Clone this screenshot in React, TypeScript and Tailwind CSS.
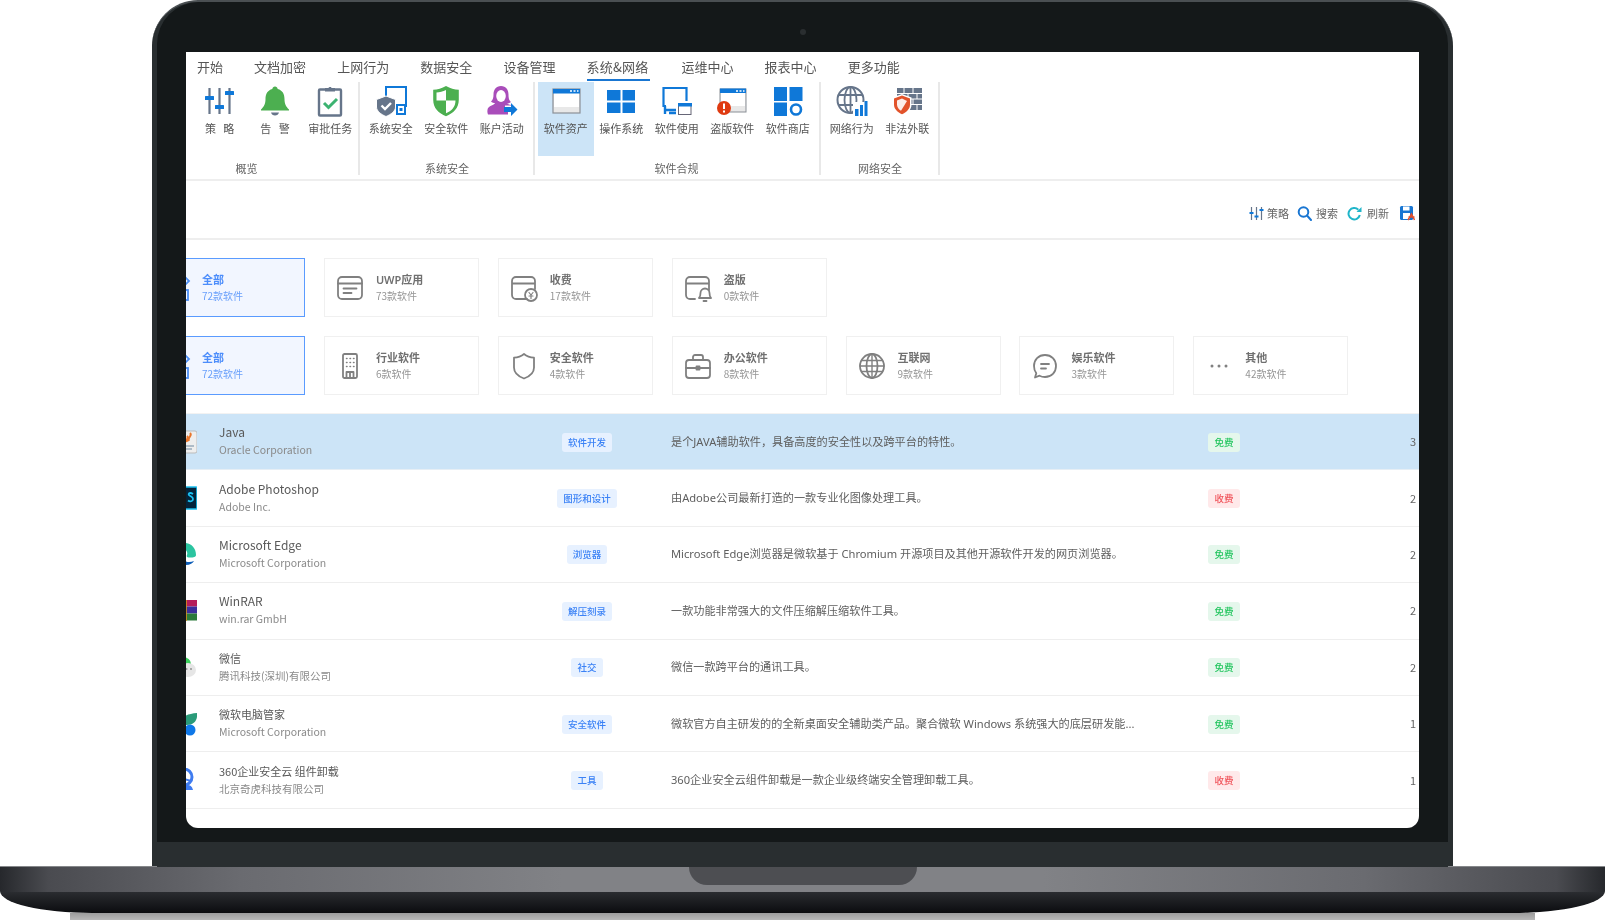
import React from "react";

type IC = React.ReactNode;
const S = ({ children, w = 32 }: { children: IC; w?: number }) => (
  <svg width={w} height={w} viewBox="0 0 32 32" fill="none" className="shrink-0">{children}</svg>
);
const G = "#66758a";
const B = "#0f78d8";

const rIcons: Record<string, IC> = {
  sliders: (
    <S>
      <path d="M5.5 3v26M15.500 3v26M25.500 3v26" stroke={G} strokeWidth="2.2" />
      <rect x="1" y="11" width="9" height="4" rx=".6" fill={B} />
      <rect x="11" y="20" width="9" height="4" rx=".6" fill={B} />
      <rect x="21" y="6" width="9" height="4" rx=".6" fill={B} />
    </S>
  ),
  bell: (
    <S>
      <path d="M16 1.500c1.500 0 2.500 1 2.700 2.500 4.800 1.300 6.800 5 6.800 10 0 5 1.500 7.500 4.500 10.500v1H2v-1c3-3 4.500-5.500 4.500-10.500s2-8.700 6.800-10c.2-1.500 1.200-2.500 2.700-2.500z" fill="#4caf50" />
      <path d="M12 27.500h8c-.5 2-2 3-4 3s-3.500-1-4-3z" fill={G} />
    </S>
  ),
  clip: (
    <S>
      <rect x="5" y="4.500" width="22" height="26" rx="1" stroke={G} strokeWidth="2.400" />
      <path d="M11 6.500V3h3.500c.3-1.400 3-1.400 3 0H21v3.500z" fill={G} />
      <path d="M10 18l4.500 4.500L23 14" stroke="#3cb371" strokeWidth="3" />
    </S>
  ),
  syssec: (
    <S>
      <rect x="11" y="2" width="20" height="19" stroke={B} strokeWidth="2" />
      <rect x="22" y="20" width="8" height="9" fill="#fff" stroke={B} strokeWidth="2" />
      <rect x="24.500" y="23" width="3" height="3" fill={B} />
      <path d="M11 11l9.500 3.500V22c0 4-4.500 7.500-9.500 9.500C6 29.500 1.500 26 1.500 22v-7.500z" fill={G} stroke="#fff" strokeWidth="1" />
      <path d="M6.500 20.500l3.500 3.500 6-6" stroke="#fff" strokeWidth="2.400" />
    </S>
  ),
  shield: (
    <S>
      <path d="M16 1c4 2.500 8.500 3.600 12.800 3.800v10c0 8.500-5.500 13.500-12.800 16.500C8.700 28.300 3.200 23.300 3.200 14.800v-10C7.500 4.600 12 3.500 16 1z" fill="#4caf50" />
      <path d="M16 5v10.500H6.500V7.500C9.500 7.200 13 6.400 16 5zM16 15.500h9.500c0 6.500-4 10.500-9.500 12.800z" fill="#fff" />
    </S>
  ),
  user: (
    <S>
      <path d="M15 1c5 0 7.500 4 7.500 8.500s1 6 2.500 7.500c-1.500 1-3 1.500-4 1.500 2 1 4 1.500 5 2H19v6h3v3H2c-.8-2-.8-4-.2-6 1.200-2.500 5-3.300 7.400-5-1.500-.5-3-1-4.200-2 1.800-1.800 2.500-3.500 2.500-7C7.500 5 10 1 15 1z" fill="#a94dba" />
      <ellipse cx="15" cy="11" rx="4.800" ry="6" fill="#fff" />
      <path d="M18 22h7v-4l6.500 6.500L25 31v-4h-7z" fill={B} />
    </S>
  ),
  win: (
    <S>
      <rect x="3" y="4" width="27" height="24" fill="#e8e8e8" stroke="#8a8f96" strokeWidth="1.200" />
      <rect x="4" y="8" width="25" height="14" fill="#fff" />
      <rect x="3" y="4" width="27" height="4.500" fill={B} />
      <path d="M20 6h2M23.500 6h2M27 6h1.500" stroke="#fff" strokeWidth="1.500" />
    </S>
  ),
  winos: (
    <S>
      <path d="M2 5h13.500v10.500H2zM17.500 5H30v10.500H17.500zM2 17.500h13.500V28H2zM17.500 17.500H30V28H17.500z" fill={B} />
    </S>
  ),
  mon: (
    <S>
      <path d="M5 21H2.500V3H25.500v13" stroke={B} strokeWidth="2.200" />
      <path d="M3 25h12M8 28h7M4 21v8" stroke={B} strokeWidth="2.400" />
      <rect x="17.500" y="19" width="12.500" height="10.500" fill="#fff" stroke="#667" strokeWidth="1" />
      <rect x="17" y="18" width="14" height="3.500" fill={B} />
    </S>
  ),
  pirate: (
    <S>
      <rect x="4" y="4" width="26" height="23" fill="#e8e8e8" stroke="#8a8f96" strokeWidth="1" />
      <rect x="5" y="8" width="24" height="13" fill="#fff" />
      <rect x="4" y="3.500" width="26" height="4.500" fill={B} />
      <path d="M20 6h2M23.500 6h2M27 6h1.500" stroke="#fff" strokeWidth="1.500" />
      <circle cx="8" cy="23" r="7" fill="#df3a10" />
      <path d="M8 18.500v5.500M8 25.500v2" stroke="#fff" strokeWidth="2" />
    </S>
  ),
  store: (
    <S>
      <path d="M2 2h13v14H2zM17.500 2H30.500v14H17.500zM2 17.500h13V31H2z" fill={B} />
      <circle cx="24" cy="24.500" r="5" stroke={B} strokeWidth="2.600" />
    </S>
  ),
  globe: (
    <S>
      <circle cx="14.500" cy="15" r="13" stroke={G} strokeWidth="2" />
      <ellipse cx="14.500" cy="15" rx="6" ry="13" stroke={G} strokeWidth="1.800" />
      <path d="M14.500 2v26M2 10h25M2 20h25" stroke={G} strokeWidth="1.800" />
      <rect x="17" y="17" width="15" height="15" fill="#fff" />
      <path d="M19 24h3.500v7H19zM24 20h3v11h-3zM28.500 16h3v15h-3z" fill={B} />
    </S>
  ),
  wall: (
    <S>
      <path d="M6 3h25v22H6z" fill={G} />
      <path d="M6 8.500h25M6 14h25M6 19.500h25M13 3v5.500M22 3v5.500M17 8.500V14M26 8.500V14M22 14v5.500M26 19.500V25" stroke="#fff" strokeWidth="1" />
      <path d="M11 9l9.500 3.500v7C20.500 25 16 29 11 31 5.800 29 1.500 25 1.500 19.500v-7z" fill="#fff" />
      <path d="M11 10.500l8 3v6c0 4.500-3.500 7.800-8 9.800-4.500-2-8-5.300-8-9.800v-6z" fill="#e2532b" />
      <path d="M11 13.500l-5 2v4c0 3 2 5 4 6.300L16 16z" fill="#fff" opacity=".9" />
    </S>
  ),
};

const Ribbon = ({ icon, label, active }: { icon: string; label: string; active?: boolean }) => (
  <div className={`w-[55.500px] flex flex-col items-center pt-[3px] h-[74px] ${active ? "bg-[#cce4f7]" : ""}`}>
    <div className="h-[31px] flex items-center justify-center">{rIcons[icon]}</div>
    <div className="mt-[5px] text-[11px] leading-[14px] text-[#555] whitespace-pre">{label}</div>
  </div>
);

const groups = [
  { w: "w-[174px] pl-[6px]", label: "概览", lc: "pr-[57px]", items: [["sliders", "策   略"], ["bell", "告   警"], ["clip", "审批任务"]] },
  { w: "w-[175px] pl-[3px]", label: "系统安全", lc: "pr-[2px]", items: [["syssec", "系统安全"], ["shield", "安全软件"], ["user", "账户活动"]] },
  { w: "w-[286px] pl-[3px]", label: "软件合规", lc: "pr-[4px]", items: [["win", "软件资产"], ["winos", "操作系统"], ["mon", "软件使用"], ["pirate", "盗版软件"], ["store", "软件商店"]] },
  { w: "w-[119px] pl-[3px]", label: "网络安全", lc: "pr-[2px]", items: [["globe", "网络行为"], ["wall", "非法外联"]] },
];

const menu = ["开始", "文档加密", "上网行为", "数据安全", "设备管理", "系统&网络", "运维中心", "报表中心", "更多功能"];

const CI = ({ children }: { children: IC }) => (
  <svg width="30" height="30" viewBox="0 0 30 30" fill="none" stroke="#808080" strokeWidth="1.800" strokeLinecap="round" strokeLinejoin="round" className="shrink-0">{children}</svg>
);
const cardIcons: Record<string, IC> = {
  all: (
    <svg width="30" height="30" viewBox="0 0 30 30" fill="none" stroke="#4b8ef5" strokeWidth="1.800" className="shrink-0">
      <rect x="3" y="3" width="10" height="10" />
      <rect x="3" y="17" width="10" height="10" />
      <rect x="17" y="17" width="10" height="10" />
      <path d="M22 2l6 6-6 6-6-6z" />
    </svg>
  ),
  uwp: <CI><rect x="3" y="4" width="24" height="22" rx="4" /><path d="M3 10.500h24M8.500 15.500h13M8.500 20h8" /></CI>,
  fee: <CI><path d="M18 26H7a4 4 0 0 1-4-4V8a4 4 0 0 1 4-4h15a4 4 0 0 1 4 4v8M3 10.500h23" /><circle cx="22" cy="22" r="6" /><path d="M20 19.500l2 2.500 2-2.500M22 22v3.500M20 23h4" strokeWidth="1.200" /></CI>,
  pir: <CI><path d="M12 26H7a4 4 0 0 1-4-4V8a4 4 0 0 1 4-4h15a4 4 0 0 1 4 4v9M3 10.500h23" /><path d="M16 25c1.500-1.500 1.500-3 1.500-5a4.500 4.500 0 0 1 9 0c0 2 0 3.500 1.500 5zM20.500 28h3" /></CI>,
  ind: (
    <CI>
      <rect x="8" y="3" width="14" height="24" rx="1.500" />
      <path d="M11.500 7.500h.5M15 7.500h.5M18.500 7.500h.5M11.500 11.500h.5M15 11.500h.5M18.500 11.500h.5M11.500 15.500h.5M15 15.500h.5M18.500 15.500h.5" strokeWidth="1.500" />
      <path d="M11.500 27v-6h7v6M15 21v6" />
    </CI>
  ),
  sec: <CI><path d="M15 3c3 2.500 6.500 3.500 10 3.700v9.800c0 5.500-4.500 9-10 11-5.500-2-10-5.500-10-11V6.700C8.500 6.500 12 5.500 15 3z" /></CI>,
  off: <CI><rect x="3" y="9" width="24" height="18" rx="3" /><path d="M10 9V6a2 2 0 0 1 2-2h6a2 2 0 0 1 2 2v3M3 17h24" /><rect x="13.500" y="15.500" width="3" height="3" fill="#808080" /></CI>,
  net: <CI><circle cx="15" cy="15" r="12" /><ellipse cx="15" cy="15" rx="5.500" ry="12" /><path d="M15 3v24M3 15h24M4.500 9.500h21M4.500 20.500h21" strokeWidth="1.400" /></CI>,
  fun: <CI><path d="M15 4c6.500 0 11 4.800 11 11s-4.500 11-11 11c-2 0-4-.5-5.500-1.300L5 26.500l1.300-4.200C4.800 20.300 4 18 4 15 4 8.800 8.500 4 15 4z" /><path d="M11 13h8M11 17.500h5" /></CI>,
  more: <svg width="30" height="30" viewBox="0 0 30 30" fill="#808080" className="shrink-0"><circle cx="8" cy="15" r="1.500" /><circle cx="15" cy="15" r="1.500" /><circle cx="22" cy="15" r="1.500" /></svg>,
};

const Card = ({ icon, t, s, active }: { icon: string; t: string; s: string; active?: boolean }) => (
  <div className={`w-[155px] h-[59px] flex items-center pl-[10px] gap-[11px] border-[1.500px] ${active ? "border-[#5a9bff] bg-[#f2f6ff]" : "border-[#f0f0f0] bg-white"}`}>
    {cardIcons[icon]}
    <div className="min-w-0">
      <div className={`text-[11px] leading-[15px] font-semibold font-['Noto_Sans','Noto_Sans_CJK_SC',sans-serif] ${active ? "text-[#4c8dfb]" : "text-[#707070]"}`}>{t}</div>
      <div className={`text-[10px] leading-[17px] ${active ? "text-[#6aa0fb]" : "text-[#969696]"}`}>{s}</div>
    </div>
  </div>
);

const row1: [string, string, string][] = [["all", "全部", "72款软件"], ["uwp", "UWP应用", "73款软件"], ["fee", "收费", "17款软件"], ["pir", "盗版", "0款软件"]];
const row2: [string, string, string][] = [["all", "全部", "72款软件"], ["ind", "行业软件", "6款软件"], ["sec", "安全软件", "4款软件"], ["off", "办公软件", "8款软件"], ["net", "互联网", "9款软件"], ["fun", "娱乐软件", "3款软件"], ["more", "其他", "42款软件"]];

const appIcons: IC[] = [
  <svg width="24" height="24" viewBox="0 0 24 24"><rect x="6" y="1" width="18" height="22" rx="2" fill="#eee" stroke="#bbb" /><path d="M17 3c3 3-3 4-1 8M14 6c2 2-1 3 0 6" stroke="#e8762c" strokeWidth="2" fill="none" /><path d="M13 16h8M13 19h6" stroke="#9ab" strokeWidth="1.500" /></svg>,
  <svg width="24" height="24" viewBox="0 0 24 24"><rect x="4" y="1" width="20" height="22" rx="1" fill="#04233a" stroke="#1bc0f0" strokeWidth="1.600" /><path d="M21 8c-3-2-5-.5-4 1s4 1.500 4 4-3 3-5 1.500" stroke="#1bc0f0" strokeWidth="1.800" fill="none" transform="translate(-1 0)" /></svg>,
  <svg width="24" height="24" viewBox="0 0 24 24"><path d="M23 13C23 6 18 1 12 1 7 1 3 4 2 8c3-3 10-3 12 2 1 3-1 3 0 5 2 1 9 1 9-2z" fill="#2bc4a0" /><path d="M2 8c-2 7 3 15 11 15 4 0 7-2 8-4-5 2-10 1-11-3-1-3 1-5 3-6-3-3-9-3-11-2z" fill="#0f5fb8" /></svg>,
  <svg width="24" height="24" viewBox="0 0 24 24"><rect x="4" y="1" width="20" height="6.500" fill="#b51d5a" /><rect x="4" y="7.500" width="20" height="7" fill="#3b2d9a" /><rect x="4" y="14.500" width="20" height="7" fill="#2a7a3a" /><rect x="6" y="1" width="8" height="21" fill="#d8921a" opacity=".8" /></svg>,
  <svg width="24" height="24" viewBox="0 0 24 24"><ellipse cx="10" cy="9" rx="8" ry="7" fill="#3ad05c" /><ellipse cx="15" cy="15" rx="8" ry="7" fill="#e6e6e6" /><circle cx="13.500" cy="14" r="1.100" fill="#999" /><circle cx="18" cy="14" r="1.100" fill="#999" /></svg>,
  <svg width="24" height="24" viewBox="0 0 24 24"><path d="M6 13c0-7 6-11 18-12 1 7-3 12-10 12z" fill="#2a9b79" /><circle cx="17" cy="18" r="5.500" fill="#0f78e8" /></svg>,
  <svg width="24" height="24" viewBox="0 0 24 24"><circle cx="11" cy="9" r="8" fill="none" stroke="#3f7cf0" strokeWidth="3" /><path d="M4 9l14 4" stroke="#3f7cf0" strokeWidth="2" /><path d="M6 21a4 4 0 0 1 4-4h4c3 0 5 1 6 5H6z" fill="#3f7cf0" /></svg>,
];

const rows = [
  ["Java", "Oracle Corporation", "软件开发", "是个JAVA辅助软件，具备高度的安全性以及跨平台的特性。", "免费", "3"],
  ["Adobe Photoshop", "Adobe Inc.", "图形和设计", "由Adobe公司最新打造的一款专业化图像处理工具。", "收费", "2"],
  ["Microsoft Edge", "Microsoft Corporation", "浏览器", "Microsoft Edge浏览器是微软基于 Chromium 开源项目及其他开源软件开发的网页浏览器。", "免费", "2"],
  ["WinRAR", "win.rar GmbH", "解压刻录", "一款功能非常强大的文件压缩解压缩软件工具。", "免费", "2"],
  ["微信", "腾讯科技(深圳)有限公司", "社交", "微信一款跨平台的通讯工具。", "免费", "2"],
  ["微软电脑管家", "Microsoft Corporation", "安全软件", "微软官方自主研发的的全新桌面安全辅助类产品。聚合微软 Windows 系统强大的底层研发能...", "免费", "1"],
  ["360企业安全云 组件卸载", "北京奇虎科技有限公司", "工具", "360企业安全云组件卸载是一款企业级终端安全管理卸载工具。", "收费", "1"],
];

const Tool = ({ icon, label, gap }: { icon: IC; label: string; gap: string }) => (
  <div className={`flex items-center ${gap}`}>
    {icon}
    <span className="text-[11px] text-[#666] leading-none">{label}</span>
  </div>
);

export default function App() {
  return (
    <div className="w-[1605px] h-[920px] bg-white overflow-hidden font-['Noto_Sans_CJK_SC','Noto_Sans',sans-serif]">
      {/* lid */}
      <div className="ml-[152px] w-[1301px] h-[867px] bg-[#292e30] rounded-t-[46px] border-t-2 border-[#4a4f52] flex flex-col px-[5px]">
        <div className="h-[840px] bg-[#141819] rounded-t-[42px] px-[29px] flex flex-col">
          <div className="h-[50px] flex justify-center pt-[27px] shrink-0">
            <div className="w-[6px] h-[6px] rounded-full bg-[#2a2e30]" />
          </div>
          <div className="w-[1233px] h-[776px] bg-white rounded-b-[12px] overflow-hidden shrink-0 [filter:blur(0.35px)]">
            {/* menu */}
            <div className="h-[30px] flex items-start pl-[11px] gap-[31.100px] pt-[5px]">
              {menu.map((m, i) => (
                <div key={m} className={`text-[13px] leading-[19px] text-[#555] whitespace-nowrap ${i === 5 ? "h-[24px] border-b-2 border-[#1976d2] pr-[2px] tracking-[0.2px]" : "h-[21px]"}`}>{m}</div>
              ))}
            </div>
            {/* ribbon */}
            <div className="h-[99px] border-b-2 border-[#eeeeee] flex">
              {groups.map((g) => (
                <div key={g.label} className={`h-[93px] border-r-2 border-[#e8e8e8] flex flex-col ${g.w}`}>
                  <div className="flex">
                    {g.items.map(([ic, l]) => (
                      <Ribbon key={l} icon={ic} label={l} active={l === "软件资产"} />
                    ))}
                  </div>
                  <div className={`mt-[5px] text-center text-[11px] leading-[14px] text-[#666] ${g.lc}`}>{g.label}</div>
                </div>
              ))}
            </div>
            {/* toolbar */}
            <div className="h-[59px] border-b-2 border-[#eeeeee] flex items-center justify-end gap-[9px] pr-[4px] pt-[7px]">
              <Tool
                gap="gap-[3px] -mr-px"
                icon={
                  <svg width="15" height="15" viewBox="0 0 15 15" fill="none">
                    <path d="M2.500 1v13M7.500 1v13M12.500 1v13" stroke={G} strokeWidth="1.200" />
                    <path d="M.5 7h4M5.500 10.500h4M10.500 4h4" stroke={B} strokeWidth="1.800" />
                  </svg>
                }
                label="策略"
              />
              <Tool
                gap="gap-[4px]"
                icon={
                  <svg width="15" height="15" viewBox="0 0 15 15" fill="none" stroke="#1976d2" strokeWidth="2">
                    <circle cx="6.500" cy="6" r="4.800" />
                    <path d="M10 9.500l4 4.500" strokeLinecap="round" />
                  </svg>
                }
                label="搜索"
              />
              <Tool
                gap="gap-[5px]"
                icon={
                  <svg width="15" height="15" viewBox="0 0 15 15" fill="none" stroke="#1fb5c9" strokeWidth="2">
                    <path d="M12.800 9a5.700 5.700 0 1 1-1.500-5.300" />
                    <path d="M14.500 1v5h-5z" fill="#1fb5c9" stroke="none" />
                  </svg>
                }
                label="刷新"
              />
              <svg width="16" height="16" viewBox="0 0 16 16" className="ml-[1px]">
                <rect x="1" y="1" width="13" height="14" rx="1.500" fill="#1976d2" />
                <rect x="4" y="1.500" width="6.500" height="4" fill="#fff" />
                <rect x="4" y="8" width="7" height="6" fill="#fff" />
                <path d="M9 15l3.500-6 3 6M9.500 12h6" stroke="#e8502a" strokeWidth="1.500" fill="none" />
              </svg>
            </div>
            {/* filter + table, pulled left so first column runs under the bezel */}
            <div className="-ml-[36px] w-[1269px]">
              <div className="pt-[18px] flex gap-[18.900px]">
                {row1.map(([i, t, s], n) => <Card key={t} icon={i} t={t} s={s} active={n === 0} />)}
              </div>
              <div className="pt-[19px] flex gap-[18.900px]">
                {row2.map(([i, t, s], n) => <Card key={t} icon={i} t={t} s={s} active={n === 0} />)}
              </div>
              <div className="mt-[18px] border-t border-[#f2f2f2]">
                {rows.map((r, i) => (
                  <div key={r[0]} className={`h-[56.400px] flex items-center pl-[23px] border-b-[1.500px] ${i === 0 ? "bg-[#cce4f7] border-[#e6eef5]" : "border-[#eeeeee]"}`}>
                    <div className="w-6 h-6 shrink-0">{appIcons[i]}</div>
                    <div className="w-[308px] ml-[22px] shrink-0 -mt-px">
                      <div className={`leading-[18px] text-[#595959] whitespace-nowrap ${i >= 4 ? "text-[11px]" : "text-[12px]"}`}>{r[0]}</div>
                      <div className="text-[10.500px] leading-[18px] text-[#8a8a8a] whitespace-nowrap">{r[1]}</div>
                    </div>
                    <div className="w-[120px] flex justify-center shrink-0 mt-[1px]">
                      <span className="h-[19px] px-[6px] rounded-[3px] bg-[#e7f1ff] text-[#3b82f6] text-[9.500px] leading-[19px] font-medium whitespace-nowrap">{r[2]}</span>
                    </div>
                    <div className="w-[537px] ml-[24px] shrink-0 text-[11.150px] leading-[16px] text-[#5e5e5e] whitespace-nowrap font-['Noto_Sans','Noto_Sans_CJK_SC',sans-serif]">{r[3]}</div>
                    <div className={`w-[32px] h-[19px] mt-[1px] rounded-[3px] text-center text-[9.500px] leading-[19px] font-medium shrink-0 ${r[4] === "免费" ? "bg-[#e5f7ec] text-[#22c55e]" : "bg-[#ffe9ea] text-[#f0535a]"}`}>{r[4]}</div>
                    <div className="ml-[170px] text-[11px] text-[#666] leading-none">{r[5]}</div>
                  </div>
                ))}
              </div>
            </div>
          </div>
        </div>
        <div className="h-[25px] bg-[#292e30]" />
      </div>
      {/* base */}
      <div className="-mt-px h-[47px] overflow-hidden [border-bottom-left-radius:92px_22px] [border-bottom-right-radius:92px_22px]">
        <div className="h-[26px] bg-[linear-gradient(90deg,#26282c_0%,#4a4b50_3%,#6a6b70_15%,#818286_35%,#818286_65%,#6a6b70_85%,#4a4b50_97%,#26282c_100%)] border-t border-[#85878a] flex justify-center">
          <div className="w-[228px] h-[18px] bg-[#4d4e52] rounded-b-[18px]" />
        </div>
        <div className="h-[21px] bg-[linear-gradient(180deg,#2a2c30,#0b0c0f)]" />
      </div>
      <div className="mx-[70px] h-[7px] bg-[linear-gradient(180deg,#9c9c9c,#b8b8b8)]" />
    </div>
  );
}
